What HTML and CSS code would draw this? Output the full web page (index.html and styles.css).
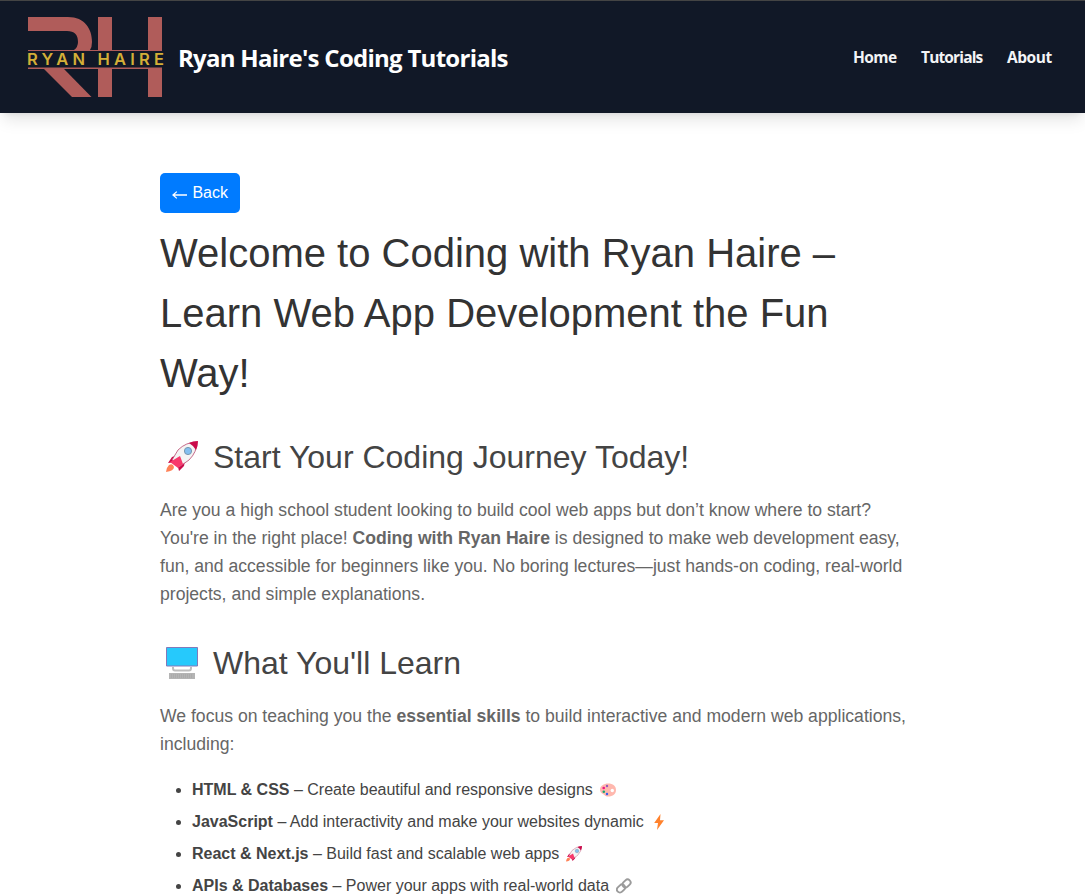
FILE: index.html
```html
<!DOCTYPE html>
<html lang="en">
<head>
<meta charset="utf-8">
<title>Ryan Haire's Coding Tutorials</title>
<link rel="stylesheet" href="styles.css">
</head>
<body>
<svg class="defs" width="0" height="0" aria-hidden="true">
  <symbol id="rocket" viewBox="0 0 32 32">
    <path d="M2 22 6 16 12 14 10 21Z M11 22 19 20 18 25 13 30Z" fill="#ca0b4a"/>
    <path d="M6 19 12 9Q20 1 31 1 31 11 23 19L13 26Z" fill="#f4f4f4" stroke="#b9456c" stroke-width=".8"/>
    <path d="M23 2Q27 0 32 0 32 5 30 9 28 5 23 2Z" fill="#ca0b4a"/>
    <path d="M4 21 14 15 17 23 12 27Z" fill="#f8386b"/>
    <path d="M3 24Q7 22 8 26 8 30 0 31 0 27 3 24Z" fill="#ff8257"/>
    <circle cx="22" cy="10" r="3.6" fill="#83bff0" stroke="#7898af"/>
  </symbol>
</svg>
<header class="header">
  <a class="brand">
    <svg class="logo" viewBox="0 0 134 80" width="134" height="80">
      <g class="logo-mark">
        <path d="M0 0H40C57 0 64 12 64 25Q64 30 62 33H46Q50 30 50 25 50 14 39 14H0Z"/>
        <path d="M16 52H36L63.500 80H44Z"/>
        <path d="M70 0H84V33H70Z M120 0H134V33H120Z M70 52H84V80H70Z M120 52H134V80H120Z"/>
        <path d="M0 33H134V34H0Z M0 50.500H134V52H0Z"/>
      </g>
      <text class="logo-text" x="-1" y="48.300" textLength="137">RYAN HAIRE</text>
    </svg>
    <span class="title">Ryan Haire's Coding Tutorials</span>
  </a>
  <nav class="nav"><a class="home">Home</a><a class="tutorials">Tutorials</a><a class="about">About</a></nav>
</header>
<main class="post">
  <a class="back"><svg class="arrow" viewBox="0 0 16 10"><path d="M16 5H1M5 1.500 1 5 5 8.500"/></svg>Back</a>
  <h1>Welcome to Coding with Ryan Haire –<br>Learn Web App Development the Fun<br>Way!</h1>
  <h2><svg class="emoji"><use href="#rocket"/></svg><span>Start Your Coding Journey Today!</span></h2>
  <p>Are you a high school student looking to build cool web apps but don’t know where to start?<br>You're in the right place! <strong>Coding with Ryan Haire</strong> is designed to make web development easy,<br>fun, and accessible for beginners like you. No boring lectures—just hands-on coding, real-world<br>projects, and simple explanations.</p>
  <h2><svg class="emoji" viewBox="0 0 32 32">
    <path d="M.5.500H31.500V19H.5Z" fill="#26c9fc" stroke="#8379b9"/>
    <path d="M7 20V21Q7 23.500 9 23.500H23Q25 23.500 25 21V20" fill="none" stroke="#bdbdbd" stroke-width="2"/>
    <path d="M3 26H29V32H3Z" fill="#b4b4b4"/><path d="M5 28H27M5 30H27" stroke="#a2a2a2" stroke-dasharray="1 1"/>
  </svg><span>What You'll Learn</span></h2>
  <p>We focus on teaching you the <strong>essential skills</strong> to build interactive and modern web applications,<br>including:</p>
  <ul>
    <li><strong>HTML &amp; CSS</strong> – Create beautiful and responsive designs <svg class="mini" viewBox="0 0 16 16"><path d="M8 1.500C13 1.500 16 4 16 8S13 14.500 8 14.500C5 14.500 5 13 3 12 1 11 0 10 0 7.500 0 4 4 1.500 8 1.500Z" fill="#ffb8ae"/><circle cx="12.300" cy="8.500" r="1.700" fill="#fff"/><circle cx="7" cy="4" r="1.200" fill="#9358bc"/><circle cx="3.700" cy="6" r="1.300" fill="#ef1484"/><circle cx="3.800" cy="9.800" r="1.300" fill="#18a870"/><circle cx="7" cy="12" r="1.200" fill="#3460ef"/></svg></li>
    <li><strong>JavaScript</strong> – Add interactivity and make your websites dynamic <svg class="mini" viewBox="0 0 16 16"><path d="M9.500 0 3.200 9H7L6 16 13 6.200H9Z" fill="#ff822d"/></svg></li>
    <li><strong>React &amp; Next.js</strong> – Build fast and scalable web apps <svg class="mini"><use href="#rocket"/></svg></li>
    <li><strong>APIs &amp; Databases</strong> – Power your apps with real-world data <svg class="mini" viewBox="0 0 16 16"><g fill="none" stroke="#9b9b9b" stroke-width="1.900"><rect x="6" y="2.500" width="9" height="6" rx="3" transform="rotate(-45 10.500 5.500)"/><rect x=".5" y="7.500" width="9" height="6" rx="3" transform="rotate(-45 5 10.500)"/></g></svg></li>
  </ul>
</main>
</body>
</html>
```
FILE: styles.css
```css
* { box-sizing: border-box; }
html { overflow: hidden; }
body { margin: 0; background: #fff; font-family: "Liberation Sans", Arial, sans-serif; color: #333; }
.defs { display: block; }
.header { display: flex; justify-content: space-between; align-items: center; height: 113px; padding: 0 32px 0 28px; border-top: 1px solid #444; background: #111827; box-shadow: 0 10px 15px -3px rgba(0,0,0,.1), 0 4px 6px -4px rgba(0,0,0,.1); font-family: "Open Sans", "Noto Sans", sans-serif; }
.brand { display: flex; align-items: center; gap: 16px; }
.logo { display: block; overflow: visible; }
.logo-mark { fill: #b05c5a; }
.logo-text { fill: #d4af37; font: 600 16.5px Inter, sans-serif; }
.title { color: #fff; font-size: 24px; font-weight: 700; letter-spacing: -.73px; white-space: nowrap; }
.nav { display: flex; gap: 24px; color: #f3f4f6; font-size: 15.5px; font-weight: 700; }
.home { width: 44px; letter-spacing: -.55px; }
.tutorials { width: 62px; letter-spacing: -.85px; }
.about { width: 46px; letter-spacing: -.45px; }
.post { width: 800px; margin: 60px auto 0; padding-left: 17.5px; white-space: nowrap; }
.back { display: flex; align-items: center; width: 80px; height: 40px; padding: 0 12px; border-radius: 5px; background: #007bff; color: #fff; font-size: 16px; gap: 5px; }
.arrow { width: 16px; height: 10px; margin-top: 3px; fill: none; stroke: #fff; stroke-width: 1.3; }
h1 { margin: 10px 0 30px; font-size: 40px; line-height: 60px; font-weight: 400; }
h2 { display: flex; align-items: center; gap: 15px; height: 48px; margin: 30px 0 15px; padding-left: 6px; font-size: 32px; font-weight: 400; color: #444; }
.emoji { width: 32px; height: 32px; }
p { margin: 0; font-size: 17.6px; line-height: 28px; color: #666; }
p + h2 { margin-top: 31px; }
ul { margin: 16px 0 0; padding-left: 32px; }
li { height: 32px; font-size: 16px; line-height: 32px; color: #444; }
.mini { width: 16px; height: 16px; margin-left: 2.5px; vertical-align: -3px; }
```
